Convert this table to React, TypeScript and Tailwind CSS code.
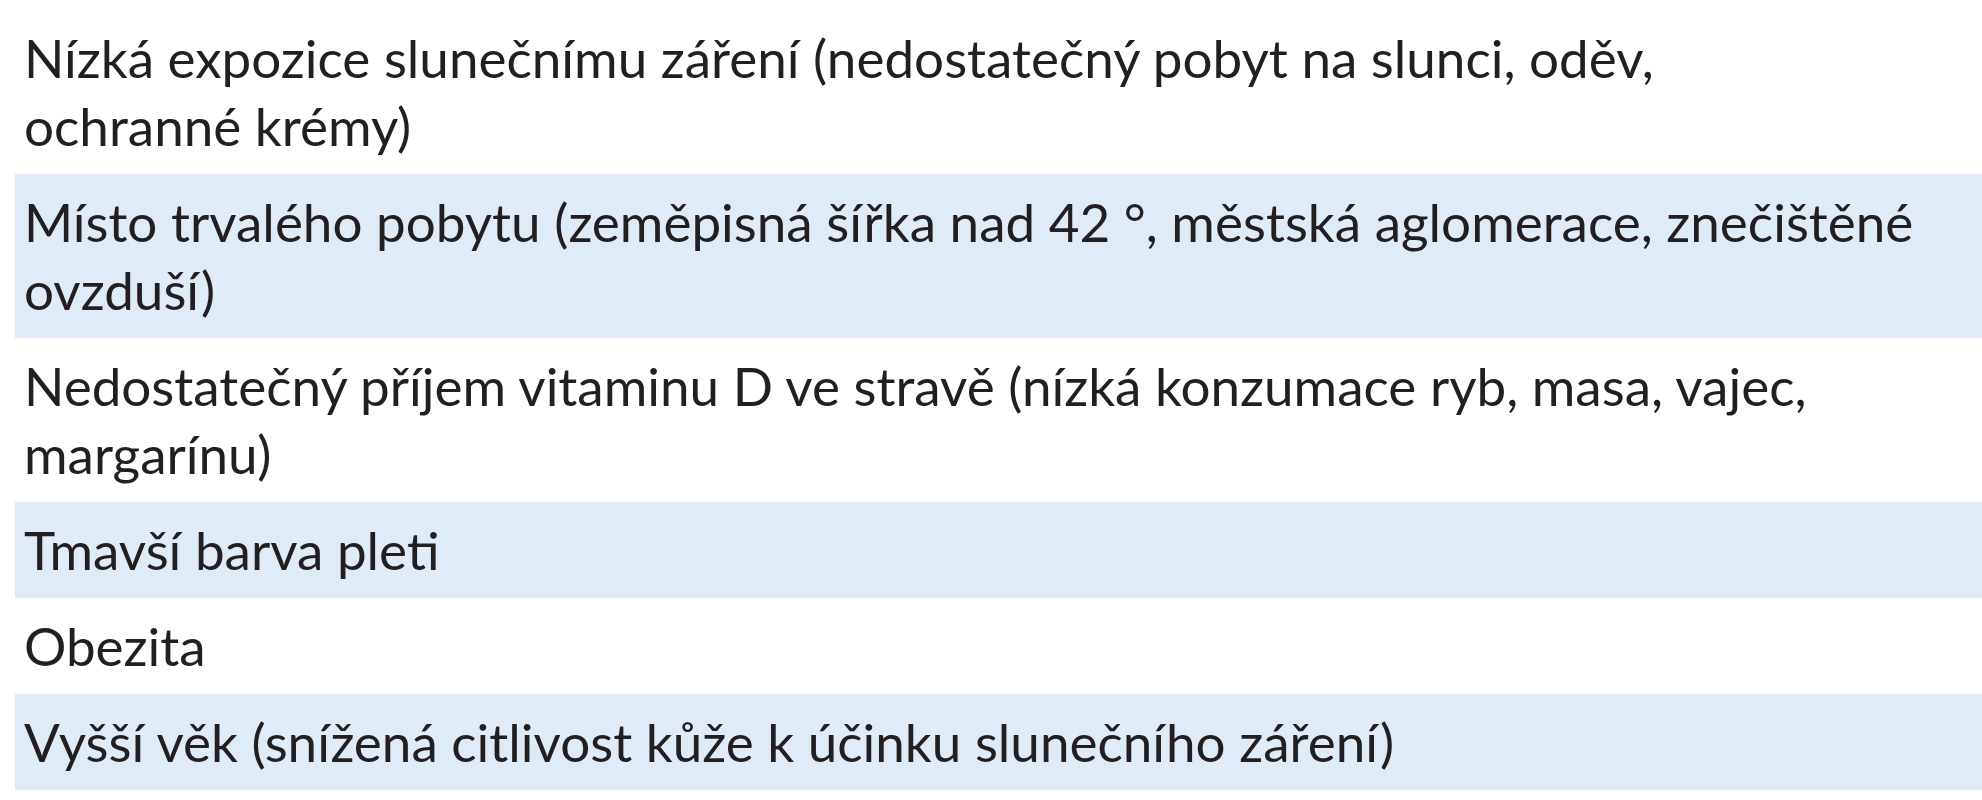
const rows: { lines: string[]; shaded: boolean }[] = [
  {
    lines: ['Nízká expozice slunečnímu záření (nedostatečný pobyt na slunci, oděv,', 'ochranné krémy)'],
    shaded: false,
  },
  {
    lines: ['Místo trvalého pobytu (zeměpisná šířka nad 42 °, městská aglomerace, znečištěné', 'ovzduší)'],
    shaded: true,
  },
  {
    lines: ['Nedostatečný příjem vitaminu D ve stravě (nízká konzumace ryb, masa, vajec,', 'margarínu)'],
    shaded: false,
  },
  { lines: ['Tmavší barva pleti'], shaded: true },
  { lines: ['Obezita'], shaded: false },
  { lines: ['Vyšší věk (snížená citlivost kůže k účinku slunečního záření)'], shaded: true },
];

export default function App() {
  return (
    <div className="min-h-[800px] w-[1982px] overflow-hidden bg-white pt-[10px] pl-[15px] font-['Lato',sans-serif] text-[#231f20]">
      {rows.map((row, i) => (
        <div
          key={i}
          className={`py-[14px] pl-[9px] text-[53px] leading-[68px] whitespace-nowrap ${row.shaded ? 'bg-[#e0ebf8]' : 'bg-white'}`}
        >
          {row.lines.map((line, j) => (
            <div key={j}>{line}</div>
          ))}
        </div>
      ))}
    </div>
  );
}
